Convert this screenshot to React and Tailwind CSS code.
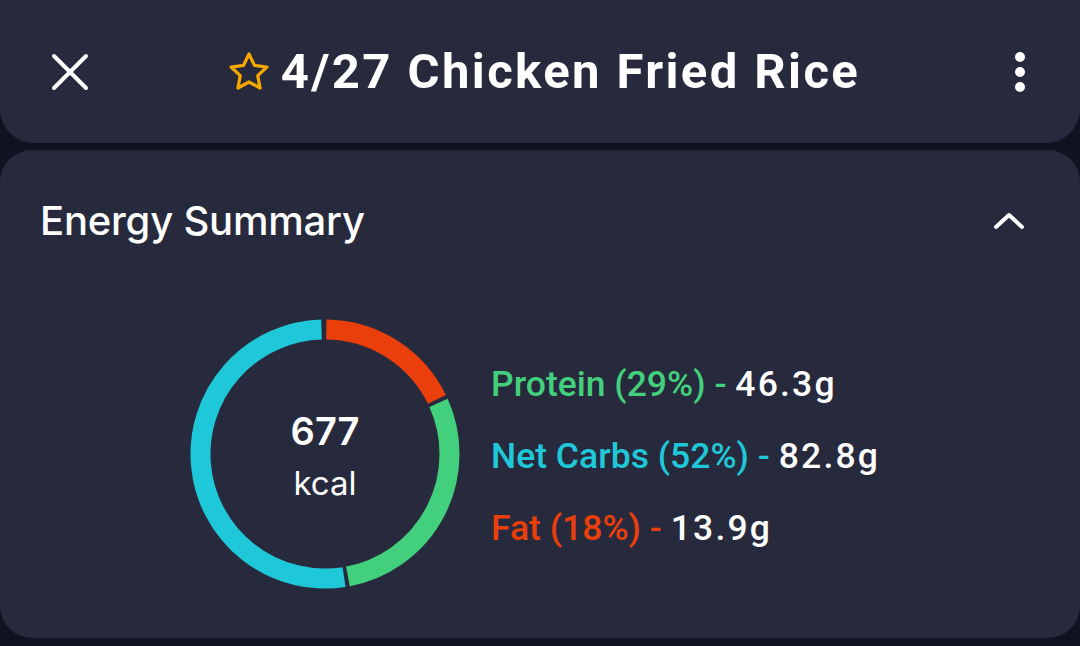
import React from 'react';

const macros = [
  { label: 'Protein (29%)', value: '46.3g', color: 'text-[#43d07c]' },
  { label: 'Net Carbs (52%)', value: '82.8g', color: 'text-[#1fc8d8]' },
  { label: 'Fat (18%)', value: '13.9g', color: 'text-[#ea3f0b]' },
];

// arcs in degrees, clockwise from 12 o'clock
const arcs = [
  { from: 0.6, to: 64, color: '#ea3f0b' },
  { from: 65.8, to: 169.4, color: '#43d07c' },
  { from: 171.2, to: 358.4, color: '#1fc8d8' },
];

function arcPath(cx, cy, r, a0, a1) {
  const p = (a) => {
    const rad = ((a - 90) * Math.PI) / 180;
    return [cx + r * Math.cos(rad), cy + r * Math.sin(rad)];
  };
  const [x0, y0] = p(a0);
  const [x1, y1] = p(a1);
  const large = a1 - a0 > 180 ? 1 : 0;
  return `M ${x0} ${y0} A ${r} ${r} 0 ${large} 1 ${x1} ${y1}`;
}

function Donut() {
  return (
    <div className="relative w-[280px] h-[280px] shrink-0">
      <svg width="280" height="280" viewBox="0 0 280 280">
        {arcs.map((a) => (
          <path key={a.color} d={arcPath(140, 140, 124.5, a.from, a.to)} stroke={a.color} strokeWidth="20" fill="none" />
        ))}
      </svg>
      <div className="absolute inset-0 flex flex-col items-center justify-center font-['Inter',sans-serif] text-white">
        <span className="text-[38px] font-semibold leading-none mt-[4px]">677</span>
        <span className="text-[33px] leading-none mt-[17px]">kcal</span>
      </div>
    </div>
  );
}

export default function App() {
  return (
    <div className="w-[1080px] h-[646px] bg-[#11121f] overflow-hidden">
      {/* top bar */}
      <header className="h-[143px] bg-[#272a3c] rounded-b-[34px] flex items-center pl-[50px] pr-[40px]">
        <svg width="40" height="40" viewBox="0 0 40 40" className="shrink-0">
          <path d="M4 4 L36 36 M36 4 L4 36" stroke="white" strokeWidth="4" strokeLinecap="round" />
        </svg>
        <div className="flex-1 flex items-center justify-center gap-[9px] pr-[4px]">
          <svg width="46" height="46" viewBox="0 0 24 24" className="shrink-0">
            <path
              d="M12 2.6l2.85 5.95 6.5.85-4.78 4.5 1.2 6.45L12 17.2l-5.77 3.15 1.2-6.45-4.78-4.5 6.5-.85z"
              fill="none"
              stroke="#f6a800"
              strokeWidth="1.7"
              strokeLinejoin="round"
            />
          </svg>
          <h1 className="font-['Roboto',sans-serif] font-bold text-[49px] tracking-[2.4px] text-white leading-none">
            4/27 Chicken Fried Rice
          </h1>
        </div>
        <div className="flex flex-col items-center gap-[5px] w-[40px]">
          <span className="w-[10px] h-[10px] rounded-full bg-white" />
          <span className="w-[10px] h-[10px] rounded-full bg-white" />
          <span className="w-[10px] h-[10px] rounded-full bg-white" />
        </div>
      </header>

      {/* energy summary card */}
      <section className="mt-[7px] h-[488px] bg-[#272a3c] rounded-[32px]">
        <div className="h-[142px] flex items-center justify-between pl-[40px] pr-[54px]">
          <h2 className="font-['Inter',sans-serif] font-medium text-[40px] text-white tracking-[-0.2px]">Energy Summary</h2>
          <svg width="34" height="20" viewBox="0 0 34 20">
            <path d="M4 16 L17 4 L30 16" stroke="white" strokeWidth="4" fill="none" strokeLinecap="round" strokeLinejoin="round" />
          </svg>
        </div>
        <div className="mt-[22px] flex items-center pl-[185px]">
          <Donut />
          <div className="ml-[26px] mt-[4px] flex flex-col gap-[24px] font-['Roboto',sans-serif] font-medium text-[35.5px] leading-[48px]">
            {macros.map((m) => (
              <div key={m.label} className={m.color}>
                {m.label} - <span className="text-white tracking-[2.2px]">{m.value}</span>
              </div>
            ))}
          </div>
        </div>
      </section>
    </div>
  );
}
